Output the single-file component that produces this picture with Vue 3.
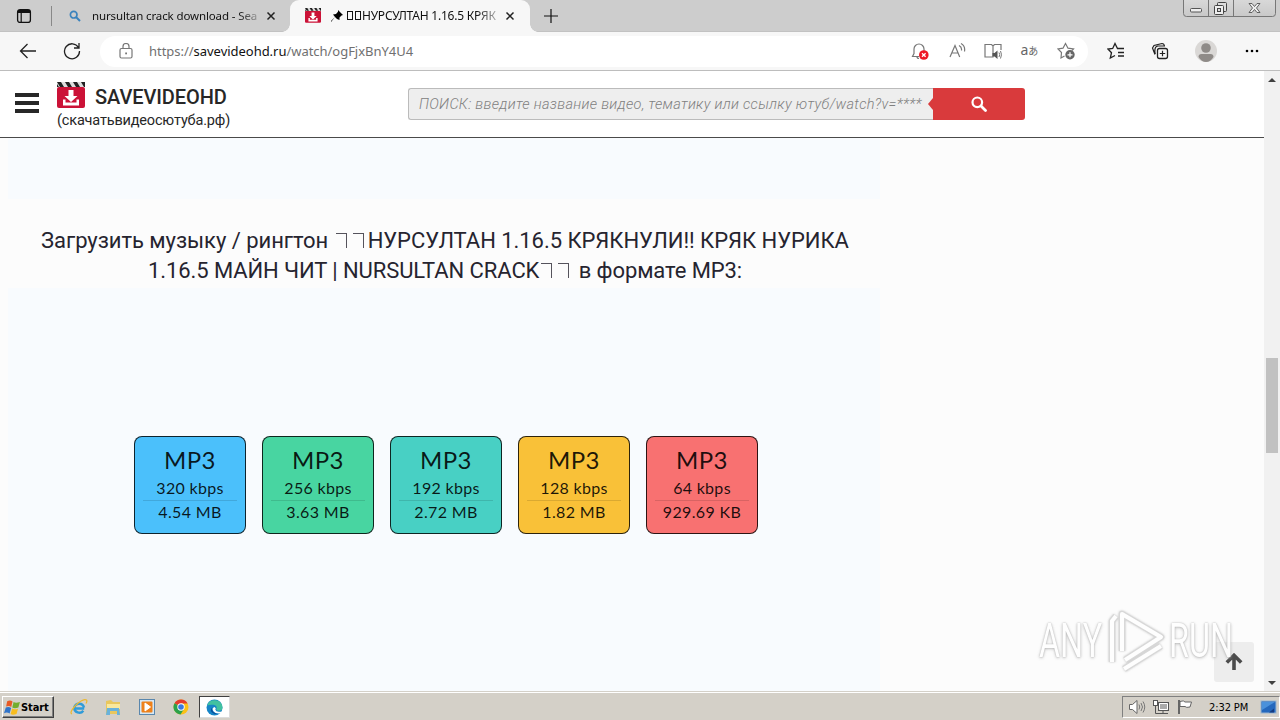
<script setup>
const formats = [
  { rate: '320 kbps', size: '4.54 MB', tone: 'blue' },
  { rate: '256 kbps', size: '3.63 MB', tone: 'green' },
  { rate: '192 kbps', size: '2.72 MB', tone: 'teal' },
  { rate: '128 kbps', size: '1.82 MB', tone: 'yellow' },
  { rate: '64 kbps', size: '929.69 KB', tone: 'red' },
]
</script>

<template>
  <div class="screen">
    <svg class="defs" width="0" height="0">
      <symbol id="clapper" viewBox="0 0 28 28">
        <rect x="0" y="5" width="28" height="21" rx="2" fill="#cb1237" />
        <rect x="0" y="0" width="28" height="5" fill="#ddd" />
        <path d="M0 0h4l3 5H3zM8 0h4l3 5h-4zM16 0h4l3 5h-4zM24 0h4v5h-1zM0 2l2 3H0z" fill="#222" />
        <path d="M11.500 8h5v6h4L14 20 7.500 14h4z" fill="#fff" />
        <path d="M6 17.500v6h16v-6h-2.500v3h-11v-3z" fill="#fff" />
      </symbol>
    </svg>

    <header class="tabbar">
      <svg class="tabs-icon" viewBox="0 0 16 16"><rect x="1.600" y="1.600" width="12.800" height="12.800" rx="2.500" fill="none" stroke="#111" stroke-width="1.300" /><path d="M2 2h12v3H2z" fill="#111" /><path d="M5.200 5v9" stroke="#111" stroke-width="1.200" /></svg>
      <i class="tab-divider"></i>
      <div class="tab idle">
        <svg class="lens" viewBox="0 0 12 12"><circle cx="4.700" cy="4.700" r="3.300" fill="none" stroke="#3b83bd" stroke-width="1.700" /><path d="M7 7l4 4" stroke="#3b83bd" stroke-width="2" /></svg>
        <span class="tab-title first">nursultan crack download - Sea</span>
        <svg class="close" viewBox="0 0 10 10"><path d="M1.500 1.500l7 7M8.500 1.500l-7 7" stroke="#222" stroke-width="1.500" /></svg>
      </div>
      <div class="tab active">
        <svg class="fav"><use href="#clapper" /></svg>
        <svg class="pin" viewBox="0 0 12 12"><path d="M7 0l5 5-1.500.5L8.500 7.500 8.500 10 6 9 4 7 0 12 0 11 4 7 2 4.500 5 4 7 1.800z" fill="#000" /></svg>
        <span class="tab-title second"><i class="box"></i><i class="box"></i>НУРСУЛТАН 1.16.5 КРЯК</span>
        <svg class="close" viewBox="0 0 10 10"><path d="M1.500 1.500l7 7M8.500 1.500l-7 7" stroke="#222" stroke-width="1.500" /></svg>
      </div>
      <svg class="plus" viewBox="0 0 14 14"><path d="M7 0v14M0 7h14" stroke="#111" stroke-width="1.200" /></svg>
      <div class="window-buttons">
        <svg viewBox="0 0 93 17">
          <path d="M.5 0v13.500q0 3 3 3h86q3 0 3-3V0M25.500 0v16.500M50.500 0v16.500" fill="none" stroke="#777" />
          <rect x="7.500" y="8.500" width="11" height="3.500" rx="1" fill="#eee" stroke="#555" />
          <rect x="34.500" y="2.500" width="9" height="9" rx="1" fill="#ddd" stroke="#444" />
          <rect x="31.500" y="5.500" width="9" height="9" rx="1" fill="#eee" stroke="#444" /><rect x="34.500" y="8.500" width="3" height="3" fill="#ddd" stroke="#444" />
          <path d="M66 3.500h3l2.500 3 2.500-3h3L73.500 8l3.500 4.500h-3l-2.500-3-2.500 3h-3L69.500 8z" fill="#eee" stroke="#555" stroke-width=".9" />
        </svg>
      </div>
    </header>

    <nav class="toolbar">
      <svg class="back" viewBox="0 0 18 18"><path d="M17 9H1.500M8.500 2L1.500 9l7 7" fill="none" stroke="#222" stroke-width="1.300" /></svg>
      <svg class="reload" viewBox="0 0 18 18"><path d="M15.500 5.500A7.500 7.500 0 1 0 16.500 9M16 1v5h-5" fill="none" stroke="#222" stroke-width="1.300" /></svg>
      <div class="address">
        <svg class="lock" viewBox="0 0 14 16"><rect x="1" y="5.500" width="12" height="9.500" rx="1.500" fill="none" stroke="#777" stroke-width="1.200" /><path d="M4 5.500V3.500a3 3 0 0 1 6 0v2" fill="none" stroke="#777" stroke-width="1.200" /><rect x="6.200" y="9.500" width="1.800" height="1.800" fill="#777" /></svg>
        <span class="url">https://<b>savevideohd.ru</b>/watch/ogFjxBnY4U4</span>
        <div class="address-icons">
          <svg viewBox="0 0 18 18"><path d="M8 14.500H1.500L3 11.500V7a5 5 0 0 1 10 0v3M6 14.500q0 2 2 2" fill="none" stroke="#777" stroke-width="1.200" /><circle cx="12.800" cy="13" r="4.800" fill="#ee1825" /><path d="M11 11.200l3.600 3.600M14.600 11.200L11 14.800" stroke="#fff" stroke-width="1.300" /></svg>
          <svg viewBox="0 0 18 18"><path d="M2 15L7 3.500 11.700 15M3.700 11h6.200M11 3.500q3 1.500 2.500 5M13 1.500q4.500 2.500 3.500 8" fill="none" stroke="#777" stroke-width="1.200" /></svg>
          <svg viewBox="0 0 18 18"><path d="M9 4v11H1V2.500h6.500L9 4l1.500-1.500H17V8M9 4v4M1 15h7" fill="none" stroke="#777" stroke-width="1.200" /><path d="M8.500 11h2l3-2.500v8.500l-3-2.500h-2z" fill="#555" /><path d="M15 10.500q1.500 2 0 4.500M16.500 9q2 3.500 0 7.500" fill="none" stroke="#777" /></svg>
          <span class="translate">a<small>あ</small></span>
          <svg viewBox="0 0 18 18"><path d="M7.500 14L4 16l.5-5.500L1 7l5-.8L8.500 1.500 11 6.200l5.500.8L15 8.500" fill="none" stroke="#777" stroke-width="1.200" /><circle cx="13" cy="12.800" r="4.700" fill="#666" /><path d="M13 10.300v5M10.500 12.800h5" stroke="#fff" stroke-width="1.200" /></svg>
        </div>
      </div>
      <div class="browser-icons">
        <svg viewBox="0 0 18 18"><path d="M14.500 6.500h-4L8 1.500 5.700 6.500 1 7l3.500 3.700L3.300 16 8 13.500M11 6.500H17M11 10.500h6M11 14h6" fill="none" stroke="#222" stroke-width="1.300" /></svg>
        <svg viewBox="0 0 18 18"><rect x="6.500" y="6.500" width="10" height="10" rx="2" fill="none" stroke="#222" stroke-width="1.300" /><path d="M11.500 8.800v5.400M8.800 11.500h5.400M4 12.500L1.500 6 3 3.500 11 1.500q2 0 2.500 2.500M4.500 12q-1-1-.5-5 .5-3 3-3h7" fill="none" stroke="#222" stroke-width="1.200" /></svg>
        <svg class="avatar" viewBox="0 0 22 22"><circle cx="11" cy="11" r="11" fill="#dad8d6" /><circle cx="11" cy="8" r="4.800" fill="#8f8b88" /><path d="M3.500 17q0-3 3-3h9q3 0 3 3-3 5-7.500 5t-7.500-5z" fill="#8f8b88" /></svg>
        <svg viewBox="0 0 18 18"><circle cx="4" cy="9" r="1.300" /><circle cx="9" cy="9" r="1.300" /><circle cx="14" cy="9" r="1.300" /></svg>
      </div>
    </nav>

    <div class="viewport">
      <div class="page">
        <header class="site-header">
          <div class="burger"><i></i><i></i><i></i></div>
          <div class="brand">
            <div class="brand-row"><svg class="logo"><use href="#clapper" /></svg><strong>SAVEVIDEOHD</strong></div>
            <span class="domain">(скачатьвидеосютуба.рф)</span>
          </div>
          <div class="search">
            <div class="field"><span>ПОИСК: введите название видео, тематику или ссылку ютуб/watch?v=****</span></div>
            <button><svg viewBox="0 0 16 16"><circle cx="6.300" cy="6.300" r="4.800" fill="none" stroke="#fff" stroke-width="2.200" /><path d="M10 10l4.500 4.500" stroke="#fff" stroke-width="2.800" stroke-linecap="round" /></svg></button>
          </div>
        </header>
        <main>
          <section class="panel upper"></section>
          <h2>
            <span class="line one">Загрузить музыку / рингтон <i class="miss"></i><i class="miss"></i>НУРСУЛТАН 1.16.5 КРЯКНУЛИ!! КРЯК НУРИКА</span>
            <span class="line two">1.16.5 МАЙН ЧИТ | NURSULTAN CRACK<i class="miss"></i><i class="miss"></i> в формате MP3:</span>
          </h2>
          <section class="panel formats">
            <a v-for="f in formats" :key="f.rate" class="card" :class="f.tone">
              <span class="kind">MP3</span>
              <span class="rate">{{ f.rate }}</span>
              <span class="size">{{ f.size }}</span>
            </a>
          </section>
        </main>
        <div class="to-top"><svg viewBox="0 0 18 18"><path d="M9 17V3M1.800 9.500L9 2.300l7.200 7.200" fill="none" stroke="#4b4b4b" stroke-width="3.600" /></svg></div>
        <div class="watermark">
          <span>ANY</span>
          <svg viewBox="0 0 60 64"><g fill="none" stroke-linejoin="round"><path d="M14 42V5L53 28 17 51M4 53V12l4-5M16 60l37-23" stroke="#d2d2d2" stroke-width="6.500" /><path d="M14 42V5L53 28 17 51M4 53V12l4-5M16 60l37-23" stroke="#fff" stroke-width="4" /></g></svg>
          <span class="run">RUN</span>
        </div>
      </div>
      <aside class="scrollbar">
        <svg viewBox="0 0 8 5"><path d="M0 5l4-4 4 4z" fill="#404040" /></svg>
        <i class="thumb"></i>
        <svg viewBox="0 0 8 5"><path d="M0 0l4 4 4-4z" fill="#404040" /></svg>
      </aside>
    </div>

    <footer class="taskbar">
      <div class="start">
        <svg viewBox="0 0 16 16"><path d="M3 2q3-1.500 5 .3L6.800 7.500Q5 6 2 7z" fill="#e85a25" /><path d="M9 2.800q2 1.500 6 0L13.500 8Q10 9.300 7.800 8z" fill="#73ad2e" /><path d="M1.700 8q3-1 5 .5L5.300 13.700Q3 12 0 13.300z" fill="#3174c9" /><path d="M7.700 9q2 1.300 5.500.2L11.800 14Q8 15.500 6.200 14z" fill="#f8bd1f" /></svg>
        <b>Start</b>
      </div>
      <svg class="task" viewBox="0 0 18 18"><path d="M14.200 10.500H4.700M14 9.500A5 5 0 0 0 4.300 9.500a5 5 0 0 0 9 3.200" fill="none" stroke="#2f9bd9" stroke-width="2.500" /><path d="M2 16q-3-1 3-8Q13 0 16.500 2q1 1-.5 3.500" fill="none" stroke="#edb72b" stroke-width="1.200" /></svg>
      <svg class="task" viewBox="0 0 18 18"><path d="M2 3l5-1 2 2h7v12H2z" fill="#e9c75d" /><path d="M3 6h13v5H3z" fill="#fae89c" /><path d="M3 10h12l1 7h-3v-4H6v4H2z" fill="#69b2db" /></svg>
      <svg class="task" viewBox="0 0 18 18"><rect x="1.500" y="1.500" width="15" height="15" fill="#d6e7f4" stroke="#5a87ad" /><rect x="3.500" y="3.500" width="11" height="11" rx="1" fill="#ee811b" /><path d="M7 5l5.500 4L7 13z" fill="#fff" stroke="#fff" /></svg>
      <svg class="task" viewBox="0 0 18 18"><circle cx="9" cy="9" r="7.500" fill="#fbc116" /><path d="M9 9L2.500 5.200A7.500 7.500 0 0 1 15.600 5.500H9z" fill="#e33b2e" /><path d="M2.500 5.200A7.500 7.500 0 0 0 8.500 16.500L12 11 9 9z" fill="#2ba14b" /><circle cx="9" cy="9" r="3.700" fill="#fff" /><circle cx="9" cy="9" r="2.800" fill="#3979df" /></svg>
      <div class="edge">
        <svg viewBox="0 0 16 16"><circle cx="8" cy="8" r="7.500" fill="#1685c7" /><path d="M1 6A7.500 7.500 0 0 1 15.500 8q0 3-3.500 3-3 0-2-2 .5-3-3-3.500T1 6z" fill="#42c1a0" /><path d="M6 8q-1 3 2 5 2.500 1.500 5.500-.2Q9 15.500 6 13T6 8z" fill="#0b4e9b" /><path d="M8 7.500q2 1 .8 2.500.5 2 3.200 2h3v1.500q-6 1-8-2T8 7.500z" fill="#fff" /></svg>
      </div>
      <div class="tray">
        <svg viewBox="0 0 18 18"><path d="M1.500 6.500h3L9 2.500v13l-4.500-4h-3z" fill="#fff" stroke="#666" /><path d="M11 6.500q1.500 2.500 0 5M13 5q3 4 0 8M15 3.500q3.500 5.500 0 11" fill="none" stroke="#777" /></svg>
        <svg viewBox="0 0 18 18"><rect x="6.500" y="4.500" width="10" height="8" fill="#aaa" stroke="#555" /><path d="M7.500 5.500h8v6h-8z" fill="none" stroke="#fff" /><path d="M11 13v2M7 15.500h9M3.500 7v8.500H7" stroke="#555" fill="none" /><rect x="1.500" y="2.500" width="4" height="5" fill="#fff" stroke="#555" /></svg>
        <svg viewBox="0 0 18 18"><path d="M3 2v14" stroke="#666" stroke-width="2" /><path d="M4 3.500q4-1.500 5 .5h6.500l-1.500 5q-4 1-5-.5H4z" fill="#fff" stroke="#666" /></svg>
        <span class="clock">2:32 PM</span>
        <svg class="desktop" viewBox="0 0 18 18"><rect x="2" y="3" width="15" height="12" fill="#2468bd" stroke="#9ab5d0" /><path d="M3 4h13L3 12z" fill="#4a91db" /><path d="M10 14.500l5-4v4z" fill="#163c82" /></svg>
      </div>
    </footer>
  </div>
</template>

<style scoped>
* { box-sizing: border-box; }
svg { display: block; flex: none; }
.defs { position: absolute; }
.screen { width: 1280px; height: 720px; overflow: hidden; display: flex; flex-direction: column; background: #fcfcfc; }
.tabbar { height: 32px; flex: none; background: #cdcdcd; display: flex; align-items: center; border-bottom: 1px solid #c2c2c2; font: 12px "Noto Sans", sans-serif; color: #111; }
.tabs-icon { width: 16px; height: 16px; margin-left: 16px; }
.tab-divider { width: 1px; height: 20px; background: #888; margin-left: 19px; }
.tab { display: flex; align-items: center; }
.tab.idle { width: 238px; padding-left: 17px; }
.lens { width: 12px; height: 12px; }
.tab-title { white-space: nowrap; line-height: 20px; }
.first { margin-left: 11px; width: 166px; font-size: 11.500px; letter-spacing: -.12px; mask-image: linear-gradient(to right, #000 146px, rgba(0,0,0,.25)); }
.close { width: 10px; height: 10px; }
.first + .close { margin-left: 8px; }
.tab.active { position: relative; width: 240px; height: 32px; margin-bottom: -1px; background: #f7f7f7; border-radius: 9px 9px 0 0; padding-left: 15px; }
.tab.active::before, .tab.active::after { content: ""; position: absolute; bottom: 0; width: 8px; height: 8px; }
.tab.active::before { left: -8px; background: radial-gradient(circle at 0 0, transparent 7.500px, #f7f7f7 8px); }
.tab.active::after { right: -8px; background: radial-gradient(circle at 100% 0, transparent 7.500px, #f7f7f7 8px); }
.fav { width: 16px; height: 16px; }
.pin { width: 12px; height: 12px; margin-left: 10px; }
.second { margin-left: 3px; width: 151px; letter-spacing: -.22px; mask-image: linear-gradient(to right, #000 130px, rgba(0,0,0,.3)); }
.second + .close { margin-left: 8px; }
.box { display: inline-block; width: 6px; height: 9px; border: 1px solid #111; margin-left: 1px; margin-right: 1px; }
.plus { width: 14px; height: 14px; margin-left: 14px; }
.window-buttons { width: 93px; height: 17px; margin-left: auto; margin-right: 4px; align-self: flex-start; background: linear-gradient(#d8d8d8, #c8c8c8); border-radius: 0 0 4px 4px; }
.window-buttons svg { width: 93px; height: 17px; }
.toolbar { height: 39px; flex: none; background: #f7f7f7; border-bottom: 1px solid #bdbdbd; display: flex; align-items: center; }
.back { width: 18px; height: 18px; margin-left: 19px; }
.reload { width: 18px; height: 18px; margin-left: 26px; }
.address { height: 31px; width: 988px; margin-left: 19px; border-radius: 16px; background: #fff; display: flex; align-items: center; padding-left: 19px; }
.lock { width: 14px; height: 16px; }
.url { margin-left: 16px; font: 13px "Noto Sans", sans-serif; color: #707070; letter-spacing: -.03px; white-space: nowrap; }
.url b { font-weight: 400; color: #111; }
.address-icons { display: flex; align-items: center; gap: 18.500px; margin-left: auto; margin-right: 13px; }
.address-icons svg, .browser-icons svg { width: 18px; height: 18px; }
.translate { width: 18px; font: 14px/18px "Noto Sans", sans-serif; color: #666; display: flex; margin-top: -3px; align-items: baseline; }
.translate small { font: 10px "Noto Sans CJK JP", sans-serif; }
.browser-icons { display: flex; align-items: center; margin-left: 19px; gap: 26px; }
.browser-icons svg.avatar { width: 22px; height: 22px; }
.viewport { height: 620px; flex: none; display: flex; }
.page { width: 1264px; position: relative; overflow: hidden; background: #fcfcfc; }
.site-header { height: 67px; border-bottom: 1px solid #4a4a4a; background: #fff; display: flex; align-items: flex-start; }
.burger { display: flex; flex-direction: column; gap: 4px; width: 24px; margin: 22px 0 0 15px; }
.burger i { height: 4px; background: #272727; }
.brand { width: 200px; margin: 10px 0 0 18px; font-family: Roboto, sans-serif; color: #272727; }
.brand-row { display: flex; align-items: center; height: 30px; }
.logo { width: 28px; height: 28px; }
strong { font-size: 20px; font-weight: 500; margin-left: 10px; margin-top: 2px; letter-spacing: -.08px; }
.domain { display: block; font-size: 14.500px; line-height: 18px; letter-spacing: -.17px; margin-top: 1px; }
.search { margin: 17px 0 0 151px; display: flex; width: 617px; height: 32px; }
.field { width: 525px; background: #eee; border: 1px solid #bbb; border-right: 0; border-radius: 3px 0 0 3px; font: italic 300 14.500px/32px Roboto, sans-serif; letter-spacing: .315px; color: #808080; padding-left: 10px; white-space: nowrap; }
button { width: 92px; border: 0; border-radius: 0 3px 3px 0; background: #d93a3c; position: relative; display: flex; align-items: center; justify-content: center; padding: 0; }
button::before { content: ""; position: absolute; left: -5px; top: 10px; border: solid transparent; border-width: 6px 5px 6px 0; border-right-color: #d93a3c; }
button svg { width: 16px; height: 16px; }
main { width: 872px; margin-left: 8px; }
.panel { background: #f8fbfe; }
.upper { height: 61px; }
h2 { height: 89px; margin: 0; padding: 27px 0 0 0; font: 400 22px/30px Roboto, sans-serif; color: #26242f; }
.line { display: block; white-space: nowrap; }
.one { margin-left: 33px; letter-spacing: -.045px; }
.two { margin-left: 140px; letter-spacing: -.09px; }
.miss { display: inline-block; width: 11px; height: 15px; border: solid #55535c; border-width: 1px 1px 0 0; margin: 0 4px 0 2px; }
.formats { height: 403px; padding: 148px 0 0 126px; display: flex; align-items: flex-start; gap: 16px; }
.card { width: 112px; height: 98px; border: 1px solid rgba(0,0,0,.82); border-radius: 8px; display: flex; flex-direction: column; align-items: center; font-family: Lato, sans-serif; color: rgba(0,0,0,.88); padding: 7px 8px 0; }
.blue { background: #4bc0fb; } .green { background: #48d5a1; } .teal { background: #48d0c4; } .yellow { background: #f9c138; } .red { background: #f87171; }
.kind { font-size: 24px; line-height: 32px; letter-spacing: .4px; }
.rate, .size { width: 94px; text-align: center; font-size: 16px; line-height: 24px; }
.rate { border-bottom: 1px solid rgba(0,0,0,.12); letter-spacing: .3px; }
.size { line-height: 22px; letter-spacing: .35px; white-space: nowrap; }
.to-top { position: absolute; left: 1214px; top: 571px; width: 40px; height: 40px; border-radius: 3px; background: #ededed; display: flex; align-items: center; justify-content: center; }
.to-top svg { width: 18px; height: 18px; }
.watermark { position: absolute; left: 1039px; top: 538px; height: 64px; width: 200px; display: flex; align-items: center; font: 400 49px/64px Roboto, sans-serif; color: #fff; text-shadow: 0 0 2px #a4a4a4, 0 1px 4px #b5b5b5; opacity: .85; }
.watermark span { display: block; width: 65px; transform: scaleX(.66); transform-origin: left center; }
.watermark svg { width: 60px; height: 64px; margin-left: 4px; filter: drop-shadow(0 0 1px #bbb); }
.watermark .run { margin-left: 1px; transform: scaleX(.66); }
.scrollbar { width: 16px; background: #f1f1f1; display: flex; flex-direction: column; align-items: center; padding: 6px 0 5px; }
.scrollbar svg { width: 8px; height: 5px; }
.thumb { width: 12px; height: 95px; background: #c1c1c1; margin-top: 276px; margin-bottom: auto; }
.taskbar { height: 29px; flex: none; background: #d4d0c8; border-top: 1px solid #d4d0c8; box-shadow: inset 0 1px #fff; display: flex; align-items: center; padding-top: 2px; }
.start { width: 52px; height: 22px; margin-left: 2px; border: 1px solid; border-color: #fff #404040 #404040 #fff; box-shadow: inset -1px -1px #808080; display: flex; align-items: center; font: bold 11px "DejaVu Sans Condensed", sans-serif; }
.start svg { width: 17px; height: 17px; margin-left: 1px; }
.start b { margin-left: 0; letter-spacing: -.1px; }
.task { width: 18px; height: 18px; margin-left: 16px; }
.edge { width: 31px; height: 22px; margin-left: 9px; background: #fff; border: 1px solid; border-color: #404040 #ddd #ddd #404040; display: flex; align-items: center; justify-content: center; }
.edge svg { width: 17px; height: 17px; }
.tray { width: 158px; height: 22px; margin-left: auto; border: 1px solid; border-color: #808080 #fff #fff #808080; display: flex; align-items: center; padding-left: 5px; gap: 6px; }
.tray svg { width: 18px; height: 18px; }
.clock { font: 11px "DejaVu Sans Condensed", sans-serif; margin-left: 9px; width: 42px; letter-spacing: -.1px; white-space: nowrap; }
.tray .desktop { margin-left: 2px; }
</style>

<style>
html, body { margin: 0; overflow: hidden; }
</style>
